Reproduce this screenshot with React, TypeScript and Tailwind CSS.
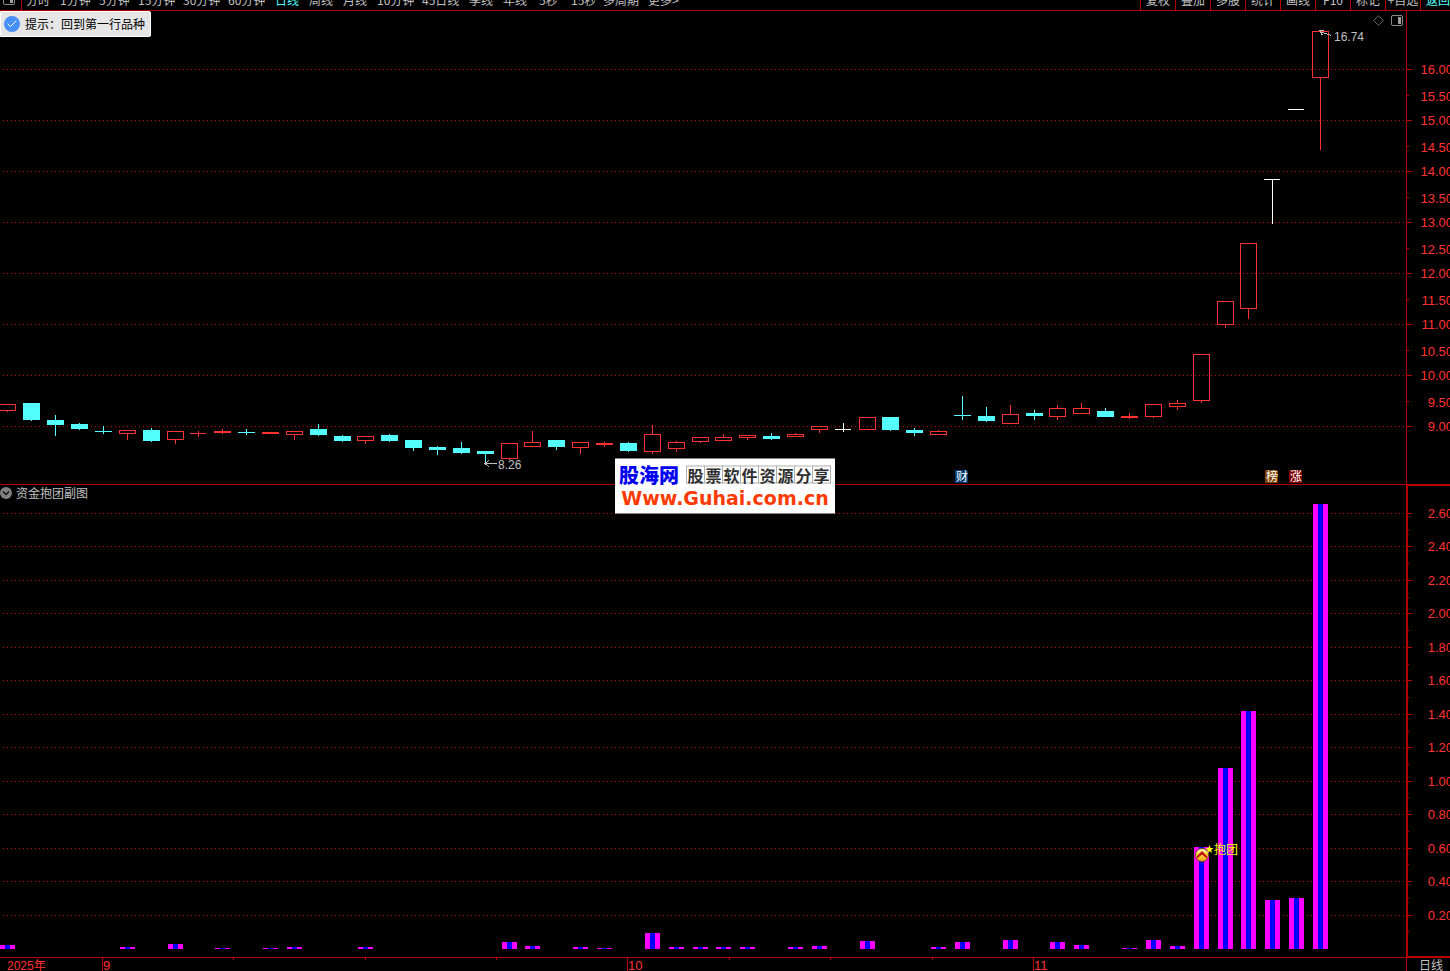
import { Check } from "lucide-react";

const PERIODS = [
  { label: "分时", width: "w-[34px]" },
  { label: "1分钟", width: "w-[39px]" },
  { label: "5分钟", width: "w-[39px]" },
  { label: "15分钟", width: "w-[45px]" },
  { label: "30分钟", width: "w-[45px]" },
  { label: "60分钟", width: "w-[47px]" },
  { label: "日线", width: "w-[34px]", active: true },
  { label: "周线", width: "w-[34px]" },
  { label: "月线", width: "w-[34px]" },
  { label: "10分钟", width: "w-[45px]" },
  { label: "45日线", width: "w-[47px]" },
  { label: "季线", width: "w-[34px]" },
  { label: "年线", width: "w-[36px]" },
  { label: "5秒", width: "w-[32px]" },
  { label: "15秒", width: "w-[32px]" },
  { label: "多周期", width: "w-[45px]" },
  { label: "更多>", width: "w-[45px]" },
];

const TOOLS = ["复权", "叠加", "多股", "统计", "画线", "F10", "标记", "+自选"];

const RED = "#ff3232";
const CYAN = "#54ffff";
const WHITE = "#ffffff";
const LINE = "#b40000";
const GREY = "#c0c0c0";
const FONT = "'Liberation Sans', 'Noto Sans CJK SC', sans-serif";
const CJK = "'Noto Sans CJK SC', sans-serif";

// r = up, c = down, w = limit / flat
// [kind, body top, body bottom, high, low]
type Candle = ["r" | "c" | "w", number, number, number, number];

const CANDLES: Candle[] = [
  ["r", 404, 411, 404, 412],
  ["c", 403, 420, 403, 421],
  ["c", 420, 425, 415, 436],
  ["c", 424, 429, 423, 430],
  ["c", 431, 432, 426, 434],
  ["r", 430, 434, 430, 440],
  ["c", 430, 441, 428, 442],
  ["r", 431, 440, 431, 444],
  ["r", 433, 434, 431, 437],
  ["r", 431, 433, 429, 434],
  ["c", 432, 433, 429, 435],
  ["r", 432, 434, 432, 434],
  ["r", 431, 435, 431, 440],
  ["c", 429, 435, 424, 436],
  ["c", 436, 441, 435, 442],
  ["r", 436, 441, 436, 444],
  ["c", 435, 441, 434, 442],
  ["c", 440, 448, 440, 451],
  ["c", 447, 450, 446, 455],
  ["c", 448, 453, 442, 454],
  ["c", 451, 454, 451, 464],
  ["r", 443, 459, 443, 460],
  ["r", 442, 447, 431, 447],
  ["c", 440, 447, 440, 450],
  ["r", 442, 448, 442, 454],
  ["r", 443, 445, 442, 447],
  ["c", 443, 451, 442, 452],
  ["r", 434, 452, 425, 454],
  ["r", 442, 449, 441, 452],
  ["r", 437, 442, 437, 443],
  ["r", 437, 441, 434, 441],
  ["r", 435, 438, 435, 440],
  ["c", 436, 439, 433, 440],
  ["r", 434, 437, 433, 437],
  ["r", 426, 430, 426, 433],
  ["w", 429, 430, 423, 432],
  ["r", 417, 430, 417, 430],
  ["c", 417, 430, 417, 431],
  ["c", 430, 433, 428, 436],
  ["r", 431, 435, 430, 435],
  ["c", 415, 416, 396, 420],
  ["c", 416, 421, 407, 422],
  ["r", 414, 424, 405, 424],
  ["c", 413, 416, 410, 420],
  ["r", 408, 417, 405, 420],
  ["r", 408, 414, 403, 414],
  ["c", 411, 417, 408, 417],
  ["r", 416, 418, 413, 419],
  ["r", 404, 417, 404, 418],
  ["r", 403, 407, 400, 410],
  ["r", 354, 401, 354, 403],
  ["r", 301, 325, 301, 328],
  ["r", 243, 309, 243, 319],
  ["w", 179, 180, 179, 224],
  ["w", 109, 110, 109, 110],
  ["r", 31, 78, 31, 150],
];

// candle index -> bar height
const BARS: [number, number][] = [
  [0, 4], [5, 2], [7, 5], [9, 1], [11, 1], [12, 2], [15, 2], [21, 7], [22, 3],
  [24, 2], [25, 1], [27, 16], [28, 2], [29, 2], [30, 2], [31, 2], [33, 2],
  [34, 3], [36, 8], [39, 2], [40, 7], [42, 9], [44, 7], [45, 4], [47, 1],
  [48, 9], [49, 3], [50, 102], [51, 181], [52, 238], [53, 49], [54, 51],
  [55, 445],
];

const BADGES = [
  { x: 955, label: "财", fill: "#003a70" },
  { x: 1265, label: "榜", fill: "#804000" },
  { x: 1289, label: "涨", fill: "#800000" },
];

const MONTHS = [
  { x: 102, label: "9" },
  { x: 627, label: "10" },
  { x: 1033, label: "11" },
];

const WEEK_TICKS = [233, 365, 496, 729, 830, 932];

const PRICES = [16, 15, 14, 13, 12, 11, 10, 9];
const LEVELS = [13, 12, 11, 10, 9, 8, 7, 6, 5, 4, 3, 2, 1];

const candleX = (i: number) => Math.round(7.455 + i * 23.864);
const priceY = (price: number) => 69 + (16 - price) * 51;
const levelY = (k: number) => Math.floor(948.5 - k * 33.46);

function PanelIcon() {
  return (
    <svg width="12" height="11" viewBox="0 0 12 11" fill="none">
      <rect x="0.5" y="0.5" width="11" height="10" rx="1.5" stroke="#8c8c8c" />
      <rect x="7" y="2" width="3" height="7" fill="#a0a0a0" />
    </svg>
  );
}

function GridLine({ y }: { y: number }) {
  return (
    <line x1="3" x2="100%" y1={y + 0.5} y2={y + 0.5} stroke={LINE} strokeDasharray="1 3" />
  );
}

function CandleShape({ candle, x }: { candle: Candle; x: number }) {
  const [kind, top, bottom, high, low] = candle;
  const color = kind === "r" ? RED : kind === "c" ? CYAN : WHITE;
  const hollow = kind === "r" && bottom - top > 2;
  const width = bottom - top === 1 && kind !== "c" ? 16 : 17;

  return (
    <g>
      {high < top && <rect x={x} y={high} width="1" height={top - high} fill={color} />}
      {low > bottom && <rect x={x} y={bottom} width="1" height={low - bottom} fill={color} />}
      {hollow ? (
        <rect x={x - 7.5} y={top + 0.5} width="16" height={bottom - top - 1} fill="none" stroke={color} />
      ) : (
        <rect x={x - 8} y={top} width={width} height={bottom - top} fill={color} />
      )}
    </g>
  );
}

function Toolbar() {
  return (
    <header className="flex h-[11px] items-end justify-between overflow-hidden border-b border-[#b40000] text-xs leading-4 whitespace-nowrap text-[#c0c0c0]">
      <nav className="flex min-w-0 items-end">
        <button aria-label="侧栏" className="flex h-4 w-[22px] items-end border-r border-[#b40000] pb-[5px] pl-[3px]">
          <PanelIcon />
        </button>
        <div className="flex pb-0.5 pl-1">
          {PERIODS.map((p) => (
            <button key={p.label} className={`${p.width} text-left ${p.active ? "text-[#54ffff]" : ""}`}>
              {p.label}
            </button>
          ))}
        </div>
      </nav>
      <div className="flex shrink-0">
        {TOOLS.map((tool) => (
          <button key={tool} className="w-[35px] border-l border-[#b40000] pb-0.5 text-center">
            {tool}
          </button>
        ))}
        <button className="w-[30px] overflow-hidden border-l border-[#b40000] pb-0.5 pl-[5px] text-left text-[#54ffff]">
          返回
        </button>
      </div>
    </header>
  );
}

function PriceChart() {
  return (
    <section className="relative flex border-b border-[#b40000]">
      <svg className="h-[473px] min-w-0 flex-1" shapeRendering="crispEdges">
        <g transform="translate(0 -11)">
          {PRICES.map((p) => (
            <GridLine key={p} y={priceY(p)} />
          ))}
          {CANDLES.map((candle, i) => (
            <CandleShape key={i} candle={candle} x={candleX(i)} />
          ))}
          {BADGES.map((b) => (
            <g key={b.label}>
              <path d={`M${b.x} 470h11l2 2v11h-13z`} fill={b.fill} />
              <text x={b.x + 1} y="481" fontSize="12" fontFamily={CJK} fill={WHITE}>
                {b.label}
              </text>
            </g>
          ))}
          <g fontSize="12" fontFamily={FONT} fill={GREY} stroke="none">
            <text x="498" y="469">8.26</text>
            <text x="1334" y="41">16.74</text>
          </g>
          <g stroke={GREY} fill="none">
            <path d="M485 463.5h12M489 460l-4 3.5 4 3.5" />
            <path d="M1320 31.5l11 4M1324 30.500h-4l2.500 5" />
          </g>
        </g>
      </svg>
      <svg className="h-[473px] w-11 shrink-0" shapeRendering="crispEdges">
        <g transform="translate(0 -11)" fontSize="13" fontFamily={FONT}>
          <rect width="1" y="11" height="473" fill={LINE} />
          {PRICES.map((p) => (
            <g key={p}>
              <rect x="0" y={priceY(p)} width="6" height="1" fill={LINE} />
              <text x="47" y={priceY(p) + 5} textAnchor="end" fill={RED}>
                {p.toFixed(2)}
              </text>
            </g>
          ))}
          {PRICES.slice(0, -1).map((p) => (
            <g key={p}>
              <rect x="0" y={priceY(p) + 26} width="3" height="1" fill={LINE} />
              <text x="47" y={priceY(p) + 32} textAnchor="end" fill={RED}>
                {(p - 0.5).toFixed(2)}
              </text>
            </g>
          ))}
        </g>
      </svg>

      <div className="absolute top-0 left-0 flex h-[26px] items-center gap-[5px] rounded-r-xs border border-white bg-[#e6e6e6] pr-[5px] pl-[3px] text-xs text-black">
        <span className="flex size-4 items-center justify-center rounded-full bg-[#4690f7] text-white">
          <Check size={12} strokeWidth={2} />
        </span>
        提示：回到第一行品种
      </div>
      <div className="absolute top-1 right-[47px] flex items-center gap-[7px]">
        <button aria-label="标记点">
          <svg width="11" height="11" viewBox="0 0 11 11" fill="none">
            <path d="M5.500 0.700L10.300 5.500L5.500 10.300L0.700 5.500Z" stroke="#8c8c8c" strokeWidth="0.800" />
          </svg>
        </button>
        <button aria-label="右侧栏">
          <PanelIcon />
        </button>
      </div>
    </section>
  );
}

function SignalMarker() {
  return (
    <g shapeRendering="auto">
      <defs>
        <linearGradient id="ball" x1="0" y1="0" x2="0" y2="1">
          <stop offset="0" stopColor="#fffbd0" />
          <stop offset="0.450" stopColor="#ffd83a" />
          <stop offset="1" stopColor="#ff9c1a" />
        </linearGradient>
      </defs>
      <circle cx="1202" cy="855" r="6.500" fill="url(#ball)" stroke="#6b4a10" />
      <path d="M1197 856l5-5 5 5v2.500l-5-4-5 4z" fill="#c01010" />
      <path
        d="M1209.500 845l1.100 3 3 .1-2.400 1.800.9 3-2.600-1.700-2.600 1.700.9-3-2.400-1.800 3-.1z"
        fill="#ffff00"
      />
      <text x="1214" y="854" fontSize="12" fontFamily={CJK} fill="#ffff00">
        抱团
      </text>
    </g>
  );
}

function IndicatorChart() {
  return (
    <section className="flex flex-1">
      <div className="flex min-w-0 flex-1 flex-col border-b border-[#b40000]">
        <div className="flex h-4 items-center gap-1 text-xs leading-4 text-[#c0c0c0]">
          <button aria-label="指标菜单">
            <svg width="12" height="12" viewBox="0 0 12 12">
              <circle cx="6" cy="6" r="6" fill="#808080" />
              <path d="M3 4.500l3 3 3-3" fill="none" stroke="#101010" strokeWidth="1.500" />
            </svg>
          </button>
          <h2>资金抱团副图</h2>
        </div>
        <svg className="h-[456px] w-full" shapeRendering="crispEdges">
          <g transform="translate(0 -501)">
            {LEVELS.map((k) => (
              <GridLine key={k} y={levelY(k)} />
            ))}
            {BARS.map(([i, height]) => (
              <g key={i}>
                <rect x={candleX(i) - 7} y={949 - height} width="15" height={height} fill="#ff00ff" />
                <rect x={candleX(i) - 2} y={949 - height} width="5" height={height} fill="#0000ff" />
              </g>
            ))}
            <SignalMarker />
          </g>
        </svg>
      </div>
      <div className="w-11 shrink-0 border-t border-b-2 border-l-2 border-[#b40000]">
        <svg className="h-[470px] w-full" shapeRendering="crispEdges">
          <g transform="translate(-2 -486)" fontSize="13" fontFamily={FONT}>
            {LEVELS.map((k) => (
              <g key={k}>
                <rect x="2" y={levelY(k)} width="4" height="1" fill={LINE} />
                <rect x="2" y={levelY(k - 0.5)} width="1" height="1" fill={LINE} />
                <text x="47" y={levelY(k) + 5} textAnchor="end" fill={RED}>
                  {(k * 0.2).toFixed(2)}
                </text>
              </g>
            ))}
          </g>
        </svg>
      </div>
    </section>
  );
}

function TimeAxis() {
  return (
    <footer className="flex h-[13px] overflow-hidden">
      <svg className="h-[13px] min-w-0 flex-1" shapeRendering="crispEdges" fontSize="13" fontFamily={FONT}>
        <text x="7" y="12" fontSize="12" fill={RED}>
          2025年
        </text>
        {MONTHS.map((m) => (
          <g key={m.label}>
            <rect x={m.x} y="0" width="1" height="13" fill={LINE} />
            <text x={m.x + 1} y="12" fill={RED}>
              {m.label}
            </text>
          </g>
        ))}
        {WEEK_TICKS.map((x) => (
          <rect key={x} x={x} y="0" width="1" height="2" fill={LINE} />
        ))}
      </svg>
      <button className="w-11 shrink-0 border-l border-[#b40000] pl-3 text-left text-xs leading-3 text-[#c0c0c0]">
        日线
      </button>
    </footer>
  );
}

function SiteLogo() {
  return (
    <a
      href="#"
      className="absolute top-1/2 left-1/2 flex h-[55px] w-[220px] -translate-x-1/2 -translate-y-1/2 flex-col items-center bg-white pt-1 whitespace-nowrap"
    >
      <span className="flex w-[212px] items-center justify-between">
        <span className="font-['Noto_Sans_CJK_SC'] text-[20px] leading-6 font-black text-[#0000f0]">股海网</span>
        <span className="flex border-l border-[#b0b0b0]">
          {"股票软件资源分享".split("").map((char) => (
            <span
              key={char}
              className="h-[18px] w-[18px] border-y border-r border-[#b0b0b0] text-center font-['Noto_Sans_CJK_SC'] text-[16px] leading-4 font-bold text-[#303030]"
            >
              {char}
            </span>
          ))}
        </span>
      </span>
      <span className="font-['DejaVu_Sans'] text-[19px] leading-[22px] font-bold text-[#fe3b05]">Www.Guhai.com.cn</span>
    </a>
  );
}

export default function App() {
  return (
    <main className="relative flex min-h-screen flex-col overflow-hidden bg-black font-['Noto_Sans_CJK_SC',sans-serif]">
      <Toolbar />
      <PriceChart />
      <IndicatorChart />
      <TimeAxis />
      <SiteLogo />
    </main>
  );
}
